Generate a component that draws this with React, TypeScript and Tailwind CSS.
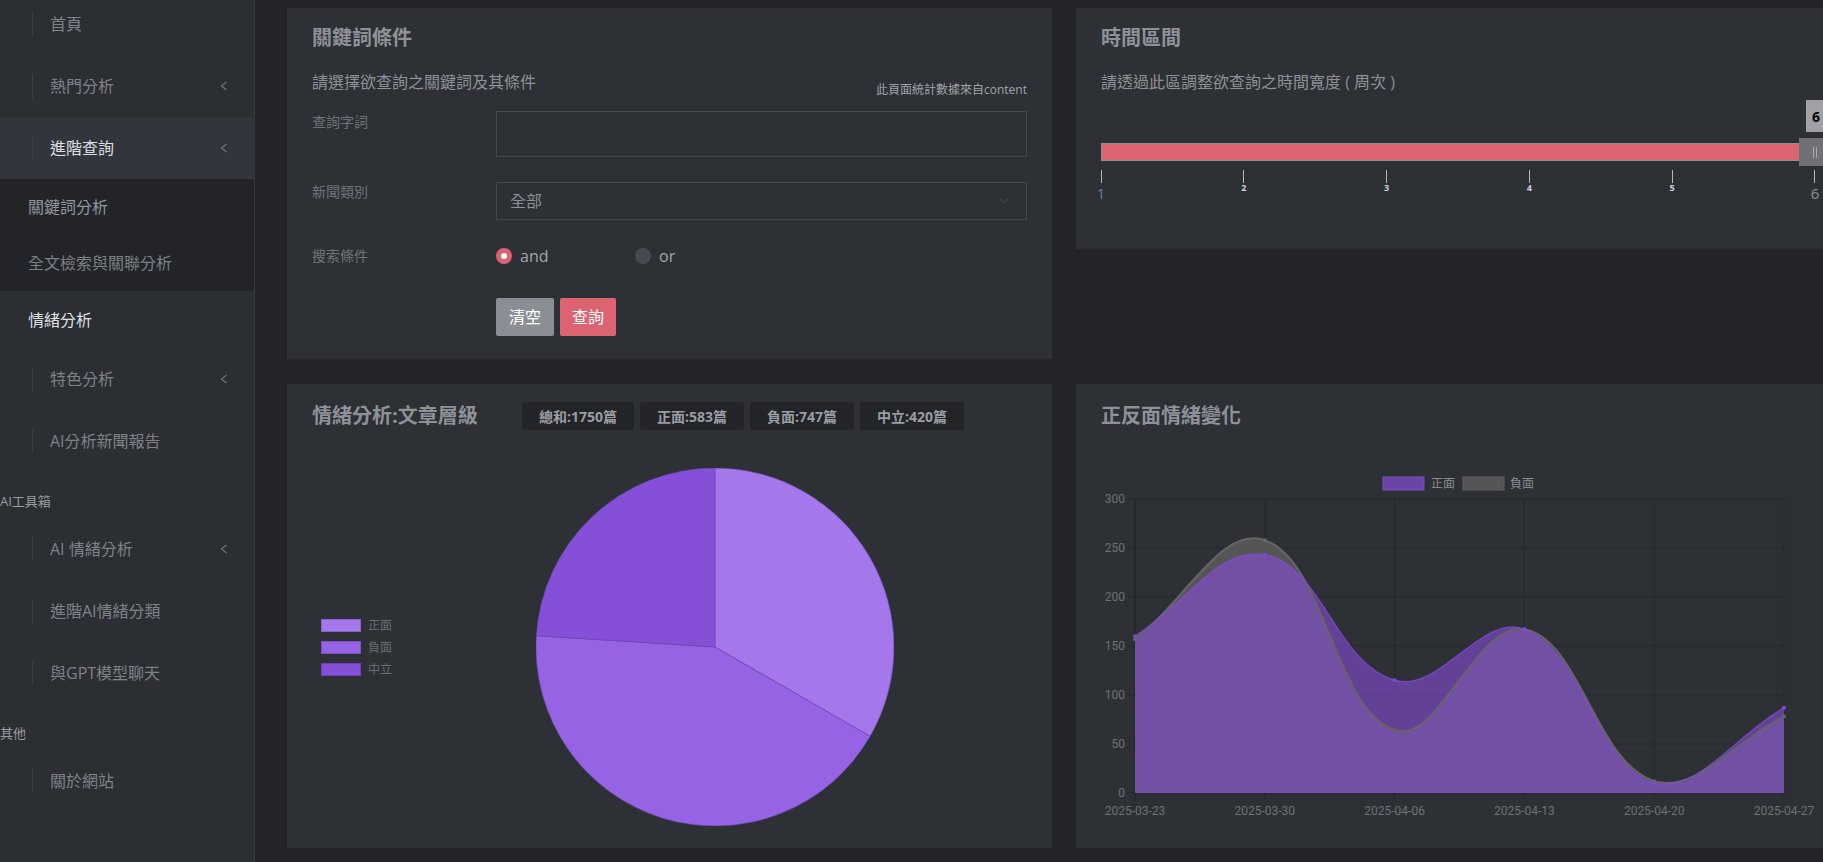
import React from "react";

type Pt = { x: number; y: number };

const posData = [160, 243, 115, 167, 10, 87];
const negData = [157, 258, 64, 167, 12, 78];
const dates = ["2025-03-23", "2025-03-30", "2025-04-06", "2025-04-13", "2025-04-20", "2025-04-27"];

// chart plot area inside the svg
const X0 = 34;
const X1 = 683;
const Y0 = 353;
const YT = 59;
const px = (i: number) => X0 + (i * (X1 - X0)) / 5;
const py = (v: number) => Y0 - (v * (Y0 - YT)) / 300;

function curve(vals: number[]) {
  const pts: Pt[] = vals.map((v, i) => ({ x: px(i), y: py(v) }));
  const t = 0.4;
  const clampY = (y: number) => Math.min(Y0, Math.max(YT, y));
  const cps = pts.map((cur, i) => {
    const prev = pts[i - 1] ?? cur;
    const next = pts[i + 1] ?? cur;
    const d01 = Math.hypot(cur.x - prev.x, cur.y - prev.y);
    const d12 = Math.hypot(next.x - cur.x, next.y - cur.y);
    const sum = d01 + d12;
    const fa = sum ? (t * d01) / sum : 0;
    const fb = sum ? (t * d12) / sum : 0;
    return {
      p: { x: cur.x - fa * (next.x - prev.x), y: clampY(cur.y - fa * (next.y - prev.y)) },
      n: { x: cur.x + fb * (next.x - prev.x), y: clampY(cur.y + fb * (next.y - prev.y)) },
    };
  });
  let d = `M${pts[0].x},${pts[0].y}`;
  for (let i = 1; i < pts.length; i++) {
    d += ` C${cps[i - 1].n.x},${cps[i - 1].n.y} ${cps[i].p.x},${cps[i].p.y} ${pts[i].x},${pts[i].y}`;
  }
  return { line: d, area: `${d} L${X1},${Y0} L${X0},${Y0} Z`, pts };
}

function slice(cx: number, cy: number, r: number, a0: number, a1: number) {
  const rad = (a: number) => ((a - 90) * Math.PI) / 180;
  const sx = cx + r * Math.cos(rad(a0));
  const sy = cy + r * Math.sin(rad(a0));
  const ex = cx + r * Math.cos(rad(a1));
  const ey = cy + r * Math.sin(rad(a1));
  const large = a1 - a0 > 180 ? 1 : 0;
  return `M${cx},${cy} L${sx},${sy} A${r},${r} 0 ${large} 1 ${ex},${ey} Z`;
}

const Chevron = () => (
  <svg width="8" height="10" viewBox="0 0 8 10" className="ml-auto mr-[26px]">
    <polyline points="6.5,1 1.5,5 6.5,9" fill="none" stroke="#6c6f75" strokeWidth="1.4" />
  </svg>
);

const MenuItem = ({ label, chevron, active }: { label: string; chevron?: boolean; active?: boolean }) => (
  <div className={`flex h-[62px] items-center ${active ? "bg-[#32353c]" : ""}`}>
    <span className="ml-[32px] h-6 w-px bg-[#3b3e44]" />
    <span className={`ml-[17px] text-[16px] ${active ? "text-[#dfe0e3]" : "text-[#7f8288]"}`}>{label}</span>
    {chevron && <Chevron />}
  </div>
);

const SubItem = ({ label, className }: { label: string; className?: string }) => (
  <div className={`flex h-[56px] items-center pl-[28px] text-[16px] ${className ?? ""}`}>{label}</div>
);

const Section = ({ label }: { label: string }) => (
  <div className="h-[46px] pt-5 text-[13px] leading-[18px] text-[#9a9da2]">{label}</div>
);

const Sidebar = () => (
  <aside className="w-[255px] shrink-0 border-r border-[#35383e] bg-[#2b2e33]">
    <div className="-mt-[7px]">
      <MenuItem label="首頁" />
      <MenuItem label="熱門分析" chevron />
      <MenuItem label="進階查詢" chevron active />
      <div className="bg-[#222428]">
        <SubItem label="關鍵詞分析" className="text-[#8f96a0]" />
        <SubItem label="全文檢索與關聯分析" className="text-[#7d8086]" />
      </div>
      <SubItem label="情緒分析" className="h-[57px] text-[#dfe0e3]" />
      <MenuItem label="特色分析" chevron />
      <MenuItem label="AI分析新聞報告" />
      <Section label="AI工具箱" />
      <MenuItem label="AI 情緒分析" chevron />
      <MenuItem label="進階AI情緒分類" />
      <MenuItem label="與GPT模型聊天" />
      <Section label="其他" />
      <MenuItem label="關於網站" />
    </div>
  </aside>
);

const CardTitle = ({ children }: { children: React.ReactNode }) => (
  <h2 className="text-[20px] font-bold leading-6 text-[#8e9298]">{children}</h2>
);

const KeywordCard = () => (
  <section className="h-[351px] bg-[#2d3035] px-[25px] pt-[18px]">
    <CardTitle>關鍵詞條件</CardTitle>
    <div className="mt-[21px] flex h-[22px] justify-between">
      <p className="text-[16px] leading-[22px] text-[#8e9197]">請選擇欲查詢之關鍵詞及其條件</p>
      <p className="mt-[12px] text-[12px] leading-[14px] text-[#a0a3a8]">此頁面統計數據來自content</p>
    </div>
    <div className="mt-[18px] flex">
      <label className="w-[184px] pt-[1px] text-[14px] leading-5 text-[#6f7379]">查詢字詞</label>
      <div className="h-[46px] flex-1 border border-[#44474d]" />
    </div>
    <div className="mt-[25px] flex">
      <label className="w-[184px] text-[14px] leading-5 text-[#6f7379]">新聞類別</label>
      <div className="flex h-[38px] flex-1 items-center border border-[#44474d] pl-[13px] pr-[17px]">
        <span className="text-[16px] text-[#8e9197]">全部</span>
        <svg width="10" height="6" viewBox="0 0 10 6" className="ml-auto">
          <polyline points="1,1 5,5 9,1" fill="none" stroke="#44474d" strokeWidth="1" />
        </svg>
      </div>
    </div>
    <div className="mt-[24px] flex h-6 items-center">
      <label className="w-[184px] text-[14px] leading-5 text-[#6f7379]">搜索條件</label>
      <div className="flex w-[139px] items-center">
        <span className="flex h-4 w-4 items-center justify-center rounded-full bg-[#dc6371]">
          <span className="h-[6px] w-[6px] rounded-full bg-white" />
        </span>
        <span className="ml-2 text-[16px] text-[#a3a6ab]">and</span>
      </div>
      <div className="flex items-center">
        <span className="h-4 w-4 rounded-full bg-[#474a52]" />
        <span className="ml-2 text-[16px] text-[#a3a6ab]">or</span>
      </div>
    </div>
    <div className="ml-[184px] mt-[30px] flex gap-[6px]">
      <button className="h-[38px] w-[58px] rounded-[2px] bg-[#8b8e95] text-[16px] text-white">清空</button>
      <button className="h-[38px] w-[56px] rounded-[2px] bg-[#dc6371] text-[16px] text-white">查詢</button>
    </div>
  </section>
);

const ticks = [1, 2, 3, 4, 5, 6];

const TimeCard = () => (
  <section className="h-[241px] self-start bg-[#2d3035] px-[25px] pt-[18px]">
    <CardTitle>時間區間</CardTitle>
    <p className="mt-[21px] text-[16px] leading-[22px] text-[#8e9197]">請透過此區調整欲查詢之時間寬度 ( 周次 )</p>
    <div className="relative w-[714px] pt-[50px]">
      <div className="h-[18px] border border-[#8f9095] bg-[#dc6371]" />
      <div className="absolute left-[705px] top-[7px] flex h-8 w-5 items-center justify-center bg-[#a0a2a7] text-[14px] font-bold text-black">
        6
      </div>
      <div className="absolute left-[698px] top-[45px] flex h-[28px] w-8 items-center justify-center gap-[2px] bg-[#707175]">
        <span className="h-[11px] w-px bg-[#a8a9ad]" />
        <span className="h-[11px] w-px bg-[#a8a9ad]" />
      </div>
      <div className="mt-[9px] flex justify-between">
        {ticks.map((n) => (
          <div key={n} className="flex w-0 flex-col items-center">
            <span className="h-[13px] w-px shrink-0 bg-[#b5b8bd]" />
            {n === 1 || n === 6 ? (
              <span className={`mt-[2px] text-[15px] leading-4 ${n === 1 ? "text-[#5d84a6]" : "text-[#8e9197]"}`}>{n}</span>
            ) : (
              <span className="text-[9px] font-bold leading-[10px] text-[#d0d2d6]">{n}</span>
            )}
          </div>
        ))}
      </div>
    </div>
  </section>
);

const badges = [
  { text: "總和:1750篇", w: "w-[112px]" },
  { text: "正面:583篇", w: "w-[104px]" },
  { text: "負面:747篇", w: "w-[104px]" },
  { text: "中立:420篇", w: "w-[104px]" },
];
const pieParts = [
  { label: "正面", value: 583, fill: "#a478ea", border: "#8c62d2" },
  { label: "負面", value: 747, fill: "#9763e5", border: "#7d4fcb" },
  { label: "中立", value: 420, fill: "#864fd7", border: "#6d3fb8" },
];

const PieCard = () => {
  const total = pieParts.reduce((s, p) => s + p.value, 0);
  let acc = 0;
  return (
    <section className="h-[464px] bg-[#2d3035] px-[25px] pt-[18px]">
      <div className="flex h-[28px] items-center">
        <h2 className="w-[210px] text-[20px] font-bold text-[#8e9298]">情緒分析:文章層級</h2>
        <div className="flex gap-[6px]">
          {badges.map((b) => (
            <span
              key={b.text}
              className={`flex h-[28px] ${b.w} items-center justify-center rounded-[3px] bg-[#222428] text-[14px] font-bold text-[#9a9da3]`}
            >
              {b.text}
            </span>
          ))}
        </div>
      </div>
      <div className="mt-[38px] flex h-[358px] items-center">
        <div className="flex w-[90px] flex-col gap-[9px] pl-[9px]">
          {pieParts.map((p) => (
            <div key={p.label} className="flex items-center">
              <span className="h-[13px] w-10 border" style={{ background: p.fill, borderColor: p.border }} />
              <span className="ml-[7px] text-[12px] leading-[13px] text-[#6a6d72]">{p.label}</span>
            </div>
          ))}
        </div>
        <div className="flex flex-1 justify-center">
          <svg width="358" height="358" viewBox="0 0 358 358">
            {pieParts.map((p) => {
              const a0 = (acc / total) * 360;
              acc += p.value;
              const a1 = (acc / total) * 360;
              return <path key={p.label} d={slice(179, 179, 179, a0, a1)} fill={p.fill} stroke="#6c48b0" strokeWidth="0.6" />;
            })}
          </svg>
        </div>
      </div>
    </section>
  );
};

const LineCard = () => {
  const pos = curve(posData);
  const neg = curve(negData);
  const yTicks = [0, 50, 100, 150, 200, 250, 300];
  return (
    <section className="h-[464px] bg-[#2d3035] px-[25px] pt-[18px]">
      <div className="flex h-[28px] items-center">
        <CardTitle>正反面情緒變化</CardTitle>
      </div>
      <svg width="716" height="390" viewBox="0 0 716 390" className="mt-[10px] block font-['Roboto',sans-serif]">
        <rect x="282" y="37" width="41" height="13" fill="#6a45a5" stroke="#7a52c4" strokeWidth="1" />
        <text x="330" y="48" fontSize="12" fill="#8a8d92" fontFamily="Noto Sans CJK TC">正面</text>
        <rect x="362" y="37" width="41" height="13" fill="#555555" stroke="#5f5f5f" strokeWidth="1" />
        <text x="409" y="48" fontSize="12" fill="#8a8d92" fontFamily="Noto Sans CJK TC">負面</text>

        {yTicks.map((v) => (
          <g key={v}>
            <line x1={X0 - 7} x2={X1} y1={py(v)} y2={py(v)} stroke="#25272b" strokeWidth="1" />
            <text x="24" y={py(v) + 4} fontSize="12" textAnchor="end" fill="#6e7176">{v}</text>
          </g>
        ))}
        {dates.map((d, i) => (
          <g key={d}>
            <line x1={px(i)} x2={px(i)} y1={YT} y2={Y0 + 7} stroke={i === 0 ? "#1f2125" : "#25272b"} strokeWidth="1" />
            <text x={px(i)} y="375" fontSize="12" textAnchor="middle" fill="#6e7176">{d}</text>
          </g>
        ))}

        <path d={neg.area} fill="#555555" />
        <path d={pos.area} fill="rgba(133,76,216,0.6)" />
        <path d={neg.line} fill="none" stroke="#666666" strokeWidth="2" />
        <path d={pos.line} fill="none" stroke="rgba(133,76,216,0.7)" strokeWidth="1.5" />
        {neg.pts.map((p, i) => (
          <circle key={`n${i}`} cx={p.x} cy={p.y} r="2" fill="#666666" />
        ))}
        {pos.pts.map((p, i) => (
          <circle key={`p${i}`} cx={p.x} cy={p.y} r="2" fill="#7b4bd0" />
        ))}
      </svg>
    </section>
  );
};

export default function App() {
  return (
    <div className="flex h-[862px] w-[1823px] overflow-hidden bg-[#222428] font-['Open_Sans','Noto_Sans_CJK_TC',sans-serif]">
      <Sidebar />
      <main className="grid shrink-0 grid-cols-[765px_765px] content-start gap-x-6 gap-y-[25px] pl-[32px] pt-2">
        <KeywordCard />
        <TimeCard />
        <PieCard />
        <LineCard />
      </main>
    </div>
  );
}
